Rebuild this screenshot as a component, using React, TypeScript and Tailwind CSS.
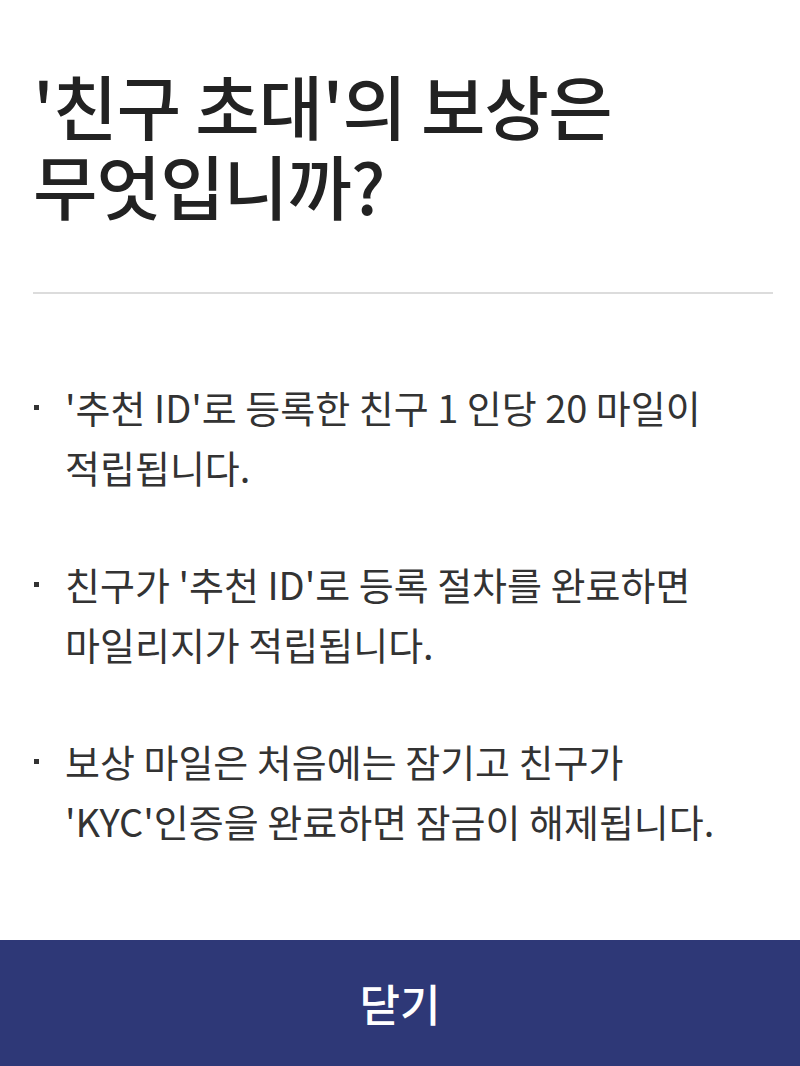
import React from "react";

const items = [
  ["'추천 ID'로 등록한 친구 1 인당 20 마일이", "적립됩니다."],
  ["친구가 '추천 ID'로 등록 절차를 완료하면", "마일리지가 적립됩니다."],
  ["보상 마일은 처음에는 잠기고 친구가", "'KYC'인증을 완료하면 잠금이 해제됩니다."],
];

export default function App() {
  return (
    <div
      className="w-[800px] h-[1066px] bg-white flex flex-col overflow-hidden"
      style={{ fontFamily: '"Noto Sans CJK KR", "Noto Sans", sans-serif' }}
    >
      <div className="flex-1 px-[33px] pt-[65px]">
        <h1 className="text-[70px] leading-[80px] font-medium text-[#222222] tracking-[-0.8px] whitespace-nowrap">
          '친구 초대'의 보상은
          <br />
          무엇입니까?
        </h1>
        <div className="mt-[67px] h-[2px] bg-[#dcdcdc] w-[740px]" />
        <ul className="mt-[83px] flex flex-col gap-[57px]">
          {items.map((lines, i) => (
            <li key={i} className="flex text-[38px] leading-[60px] text-[#333333] whitespace-nowrap">
              <span className="w-[32px] shrink-0 flex items-start">
                <span className="mt-[28px] ml-[1px] w-[5px] h-[5px] bg-[#333333]" />
              </span>
              <span>
                {lines[0]}
                <br />
                {lines[1]}
              </span>
            </li>
          ))}
        </ul>
      </div>
      <button className="h-[126px] w-full bg-[#2e3877] text-white text-[44px] font-medium flex items-center justify-center">
        닫기
      </button>
    </div>
  );
}
